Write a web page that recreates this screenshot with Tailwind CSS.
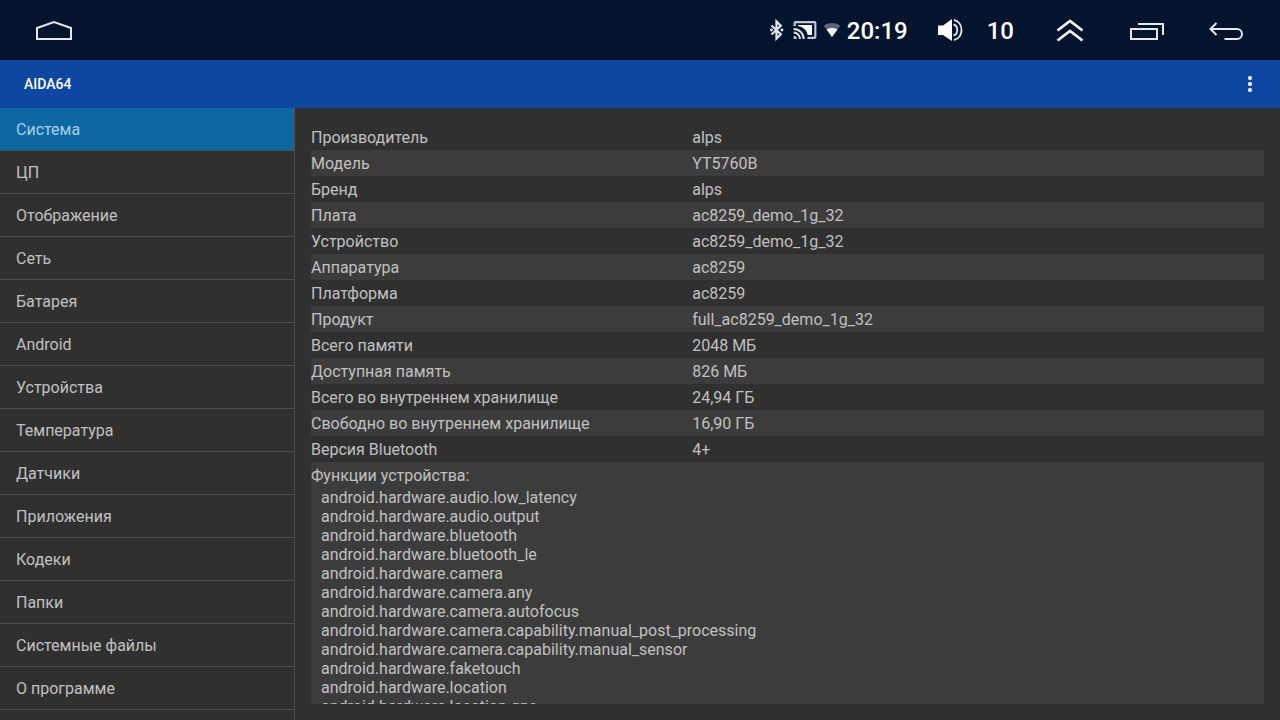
<!DOCTYPE html>
<html lang="ru">
<head>
<meta charset="utf-8">
<meta name="viewport" content="width=device-width, initial-scale=1">
<title>AIDA64</title>
<script src="https://cdn.jsdelivr.net/npm/@tailwindcss/browser@4"></script>
</head>
<body class="flex h-screen flex-col overflow-hidden bg-[#303030] font-['Roboto',sans-serif] text-base text-[#c1c1c1]">
<header class="flex h-[60px] shrink-0 items-center bg-[#03142c] pr-9 pl-[35px] text-white">
  <button type="button" aria-label="Домой">
    <svg class="h-5 w-[38px]" viewBox="0 0 38 20" fill="none" stroke="#e4e9f0" stroke-width="2"><path d="M2 19V8L19 2l17 6v11z"/></svg>
  </button>
  <div class="ml-auto flex items-center">
    <svg class="h-6 w-4" viewBox="0 0 16 24" fill="none" stroke="#dde1e8" stroke-width="2.300" role="img" aria-label="Bluetooth"><path d="M2.500 7.500l9.300 8.700-4.300 4.300v-17l4.300 4.300-9.300 8.700"/><path d="M2.400 12h.1M12.900 12h.1" stroke-linecap="round" stroke-width="2.800"/></svg>
    <svg class="ml-2 h-6 w-6" viewBox="0 0 24 24" fill="#c3c9d4" role="img" aria-label="Трансляция"><path d="M21.500 3h-19A1.900 1.900 0 0 0 .600 4.900V8h2.200V5.200h18.500v13.600H14.500v2.200h7a1.900 1.900 0 0 0 1.900-1.900V4.900a1.900 1.900 0 0 0-1.900-1.900z"/><path d="M5 7v1c4.800.900 9 4.300 9.700 9H19V7z" fill="#fff"/><path d="M.600 17.800V21h3.200a3.200 3.200 0 0 0-3.200-3.200z"/><g fill="none" stroke="#dde1e8" stroke-width="2"><path d="M.600 14.600a6.400 6.400 0 0 1 6.400 6.400"/><path d="M.600 10.900a10.100 10.100 0 0 1 10.100 10.100"/></g></svg>
    <svg class="ml-1.5 h-6 w-[18px]" viewBox="0 0 18 24" role="img" aria-label="Wi-Fi"><path d="M9 19L.700 7.800C3 6 5.900 5 9 5s6 1 8.300 2.800z" fill="#59657a"/><path d="M9 19L3.600 11.600C5 10.500 7 9.900 9 9.900s4 .600 5.400 1.700z" fill="#fff"/></svg>
    <time class="ml-1.5 pt-0.5 text-2xl font-medium">20:19</time>
    <button type="button" aria-label="Громкость" class="ml-[29px] flex items-center">
      <svg class="h-6 w-7" viewBox="0 0 28 24" fill="none" stroke="#e4e9f0" stroke-width="1.800"><path d="M1 7.500h5L15 1v22l-9-6H1z" fill="#fff" stroke="none"/><path d="M16.500 6.500c5 1.200 5 9.800 0 11"/><path d="M17 2c10 2 10 18 0 20"/></svg>
      <span class="ml-[22px] pt-0.5 text-2xl font-medium">10</span>
    </button>
    <button type="button" aria-label="Развернуть" class="ml-[42px]">
      <svg class="h-6 w-7" viewBox="0 0 28 24" fill="none" stroke="#f2f4f7" stroke-width="2.800"><path d="M1.500 12.500L14 3l12.500 9.500M1.500 22.500L14 13l12.500 9.500"/></svg>
    </button>
    <button type="button" aria-label="Недавние" class="ml-[45px]">
      <svg class="h-5 w-9" viewBox="0 0 36 20" fill="none" stroke="#e4e9f0" stroke-width="2"><path d="M2 9h26v10H2zM9 4h25v11"/></svg>
    </button>
    <button type="button" aria-label="Назад" class="ml-[43px]">
      <svg class="h-5 w-9" viewBox="0 0 36 20" fill="none" stroke="#e4e9f0" stroke-width="2"><path d="M8.500 3L2.500 9l6 6M2.500 9H29a5 5 0 0 1 0 10H16.500"/></svg>
    </button>
  </div>
</header>
<div class="flex h-12 shrink-0 items-center justify-between bg-[#0d47a1] pr-[18px] pl-6 text-white">
  <h1 class="text-sm font-medium">AIDA64</h1>
  <button type="button" aria-label="Меню" class="flex w-6 justify-center">
    <svg class="h-[18px] w-1.5" viewBox="0 0 6 18" fill="#fff"><circle cx="3" cy="3" r="2.100"/><circle cx="3" cy="9" r="2.100"/><circle cx="3" cy="15" r="2.100"/></svg>
  </button>
</div>
<div class="flex min-h-0 flex-1">
  <nav class="w-[295px] shrink-0 overflow-y-auto border-r border-[#4f4f4f] [scrollbar-width:none] *:flex *:h-[43px] *:items-center *:border-b *:border-[#4f4f4f] *:px-4 *:pt-0.5">
    <a href="#system" aria-current="page" class="bg-[#0d67a0] text-[#a6d0ea]">Система</a>
    <a href="#cpu">ЦП</a>
    <a href="#display">Отображение</a>
    <a href="#network">Сеть</a>
    <a href="#battery">Батарея</a>
    <a href="#android">Android</a>
    <a href="#devices">Устройства</a>
    <a href="#thermal">Температура</a>
    <a href="#sensors">Датчики</a>
    <a href="#apps">Приложения</a>
    <a href="#codecs">Кодеки</a>
    <a href="#folders">Папки</a>
    <a href="#files">Системные файлы</a>
    <a href="#about">О программе</a>
  </nav>
  <main class="flex min-w-0 flex-1 p-4">
    <div class="w-full overflow-y-auto [scrollbar-width:none]">
      <table class="w-full table-fixed text-left">
        <colgroup><col class="w-2/5"><col></colgroup>
        <tbody class="[&_td]:p-0 [&_td]:pt-0.5 [&_th]:p-0 [&_th]:pt-0.5 [&_th]:font-normal">
          <tr class="h-[26px] even:bg-[#3c3c3c]"><th scope="row">Производитель</th><td>alps</td></tr>
          <tr class="h-[26px] even:bg-[#3c3c3c]"><th scope="row">Модель</th><td>YT5760B</td></tr>
          <tr class="h-[26px] even:bg-[#3c3c3c]"><th scope="row">Бренд</th><td>alps</td></tr>
          <tr class="h-[26px] even:bg-[#3c3c3c]"><th scope="row">Плата</th><td>ac8259_demo_1g_32</td></tr>
          <tr class="h-[26px] even:bg-[#3c3c3c]"><th scope="row">Устройство</th><td>ac8259_demo_1g_32</td></tr>
          <tr class="h-[26px] even:bg-[#3c3c3c]"><th scope="row">Аппаратура</th><td>ac8259</td></tr>
          <tr class="h-[26px] even:bg-[#3c3c3c]"><th scope="row">Платформа</th><td>ac8259</td></tr>
          <tr class="h-[26px] even:bg-[#3c3c3c]"><th scope="row">Продукт</th><td>full_ac8259_demo_1g_32</td></tr>
          <tr class="h-[26px] even:bg-[#3c3c3c]"><th scope="row">Всего памяти</th><td>2048 МБ</td></tr>
          <tr class="h-[26px] even:bg-[#3c3c3c]"><th scope="row">Доступная память</th><td>826 МБ</td></tr>
          <tr class="h-[26px] even:bg-[#3c3c3c]"><th scope="row">Всего во внутреннем хранилище</th><td>24,94 ГБ</td></tr>
          <tr class="h-[26px] even:bg-[#3c3c3c]"><th scope="row">Свободно во внутреннем хранилище</th><td>16,90 ГБ</td></tr>
          <tr class="h-[26px] even:bg-[#3c3c3c]"><th scope="row">Версия Bluetooth</th><td>4+</td></tr>
          <tr class="even:bg-[#3c3c3c]"><td colspan="2">
            <p class="leading-6">Функции устройства:</p>
            <ul class="pl-2.5 leading-[19px]">
              <li>android.hardware.audio.low_latency</li>
              <li>android.hardware.audio.output</li>
              <li>android.hardware.bluetooth</li>
              <li>android.hardware.bluetooth_le</li>
              <li>android.hardware.camera</li>
              <li>android.hardware.camera.any</li>
              <li>android.hardware.camera.autofocus</li>
              <li>android.hardware.camera.capability.manual_post_processing</li>
              <li>android.hardware.camera.capability.manual_sensor</li>
              <li>android.hardware.faketouch</li>
              <li>android.hardware.location</li>
              <li>android.hardware.location.gps</li>
            </ul>
          </td></tr>
        </tbody>
      </table>
    </div>
  </main>
</div>
</body>
</html>
